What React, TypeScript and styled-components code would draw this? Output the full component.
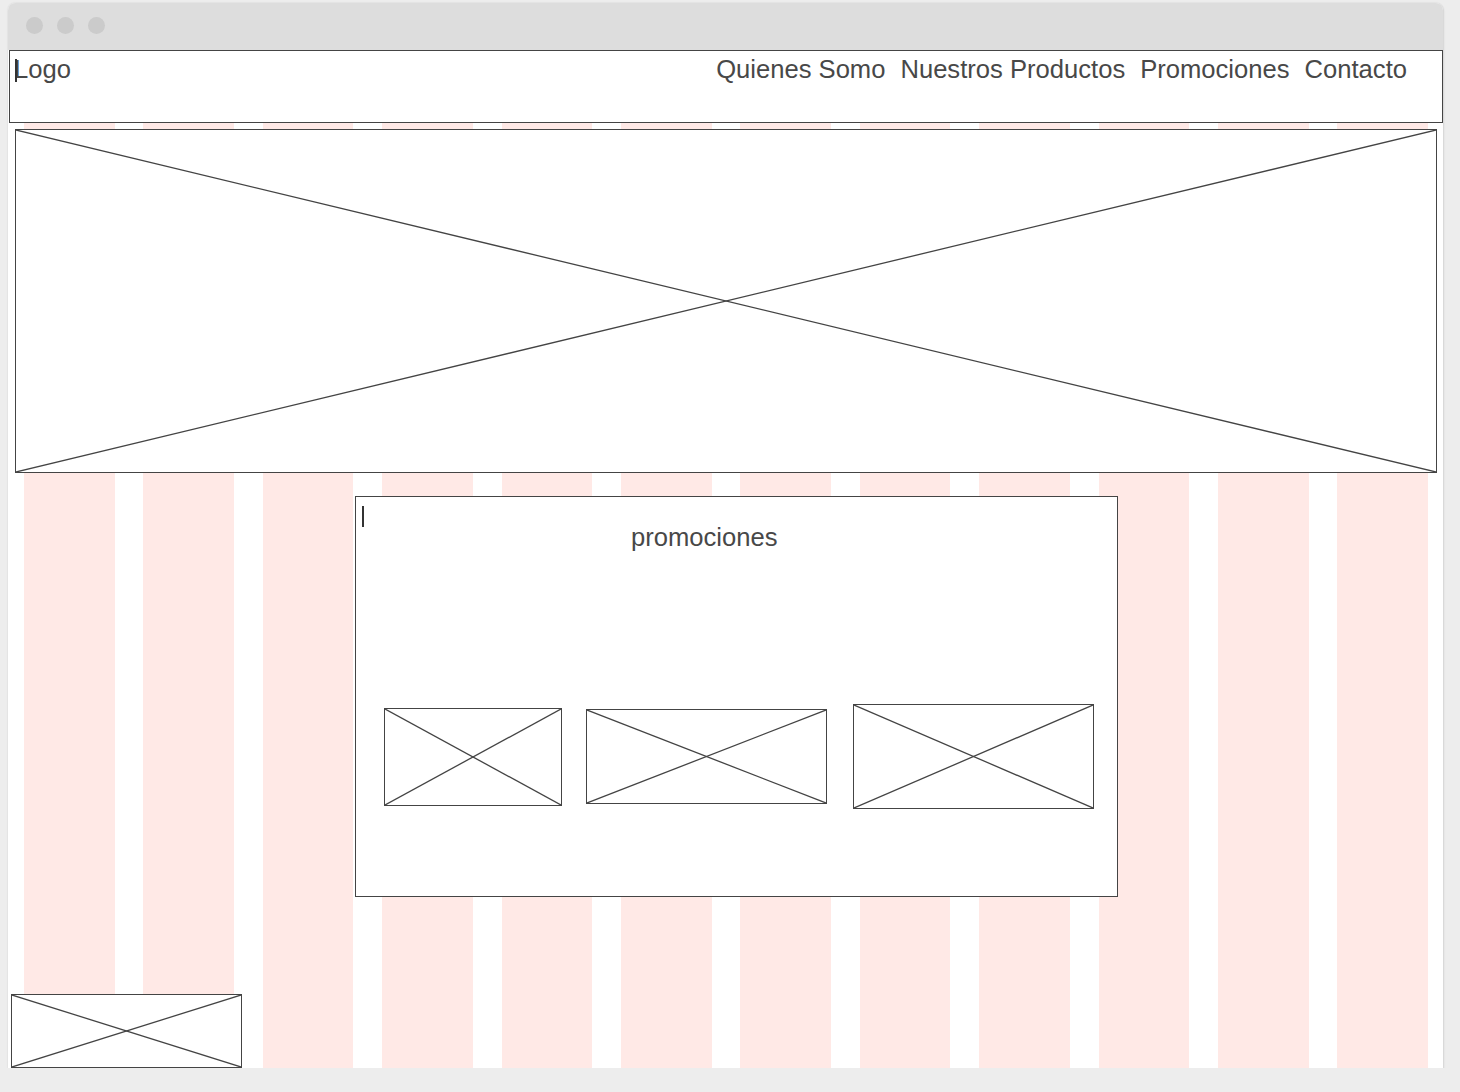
import React from "react";
import styled, { createGlobalStyle } from "styled-components";

const Global = createGlobalStyle`
  html, body { margin: 0; padding: 0; }
  body {
    background: #ededed;
    font-family: "Liberation Sans", Arial, sans-serif;
    color: #484848;
  }
  * { box-sizing: border-box; }
`;

const Window = styled.div`
  margin: 3px 0 0 8px;
  width: 1435px;
  height: 1065px;
  border-radius: 7px 7px 0 0;
  overflow: hidden;
  background: #ffffff;
  box-shadow: 0 0 2px rgba(0, 0, 0, 0.12), 1px 1px 2px rgba(0, 0, 0, 0.08);
  display: flex;
  flex-direction: column;
`;

const TitleBar = styled.div`
  height: 47px;
  flex: none;
  background: #dddddd;
  display: flex;
  align-items: center;
  gap: 14px;
  padding: 0 0 3px 18px;
`;

const Dot = styled.span`
  width: 17px;
  height: 17px;
  border-radius: 50%;
  background: #cbcbcb;
`;

const Canvas = styled.div`
  flex: 1;
  position: relative;
  background-color: #ffffff;
  background-image: repeating-linear-gradient(
    to right,
    #ffe9e6 0px,
    #ffe9e6 90.6px,
    transparent 90.6px,
    transparent 119.4px
  );
  background-size: 1404px 100%;
  background-position: 16px 0;
  background-repeat: no-repeat;
  display: flex;
  flex-direction: column;
  align-items: flex-start;
  overflow: hidden;
`;

const Header = styled.header`
  margin-left: 1px;
  width: 1434px;
  height: 73px;
  border: 1px solid #444444;
  background: #ffffff;
  display: flex;
  justify-content: space-between;
  align-items: flex-start;
  padding: 4px 35px 0 4px;
  font-size: 25.6px;
  position: relative;
`;

const Caret = styled.span<{ $left: number; $top: number; $h: number }>`
  position: absolute;
  left: ${(p) => p.$left}px;
  top: ${(p) => p.$top}px;
  width: 2px;
  height: ${(p) => p.$h}px;
  background: #333333;
`;

const Logo = styled.div`
  line-height: normal;
`;

const Nav = styled.nav`
  display: flex;
  gap: 15px;
  line-height: normal;
`;

const NavItem = styled.span``;

const Placeholder = styled.div<{ $w: number; $h: number; $ml?: number; $mt?: number }>`
  flex: none;
  width: ${(p) => p.$w}px;
  height: ${(p) => p.$h}px;
  margin-left: ${(p) => p.$ml ?? 0}px;
  margin-top: ${(p) => p.$mt ?? 0}px;
  border: 1px solid #444444;
  background: #ffffff;
  svg {
    display: block;
    width: 100%;
    height: 100%;
  }
`;

const Promo = styled.section`
  margin: 23px 0 0 347px;
  width: 763px;
  height: 401px;
  border: 1px solid #444444;
  background: #ffffff;
  position: relative;
  display: flex;
  flex-direction: column;
`;

const PromoTitle = styled.div`
  margin: 26px 0 0 275px;
  font-size: 25.6px;
  line-height: normal;
`;

const ImageRow = styled.div`
  display: flex;
  align-items: center;
  margin-top: 152px;
`;

const Cross: React.FC<{ w: number; h: number; ml?: number; mt?: number }> = ({ w, h, ml, mt }) => (
  <Placeholder $w={w} $h={h} $ml={ml} $mt={mt}>
    <svg viewBox="0 0 100 100" preserveAspectRatio="none">
      <line x1="0" y1="0" x2="100" y2="100" stroke="#444444" strokeWidth="1.3" vectorEffect="non-scaling-stroke" />
      <line x1="0" y1="100" x2="100" y2="0" stroke="#444444" strokeWidth="1.3" vectorEffect="non-scaling-stroke" />
    </svg>
  </Placeholder>
);

export default function App() {
  return (
    <>
      <Global />
      <Window>
        <TitleBar>
          <Dot />
          <Dot />
          <Dot />
        </TitleBar>
        <Canvas>
          <Header>
            <Caret $left={5} $top={8} $h={23} />
            <Logo>Logo</Logo>
            <Nav>
              <NavItem>Quienes Somo</NavItem>
              <NavItem>Nuestros Productos</NavItem>
              <NavItem>Promociones</NavItem>
              <NavItem>Contacto</NavItem>
            </Nav>
          </Header>
          <Cross w={1422} h={344} ml={7} mt={6} />
          <Promo>
            <Caret $left={6} $top={9} $h={21} />
            <PromoTitle>promociones</PromoTitle>
            <ImageRow>
              <Cross w={178} h={98} ml={28} />
              <Cross w={241} h={95} ml={24} />
              <Cross w={241} h={105} ml={26} />
            </ImageRow>
          </Promo>
          <Cross w={231} h={74} ml={3} mt={97} />
        </Canvas>
      </Window>
    </>
  );
}
